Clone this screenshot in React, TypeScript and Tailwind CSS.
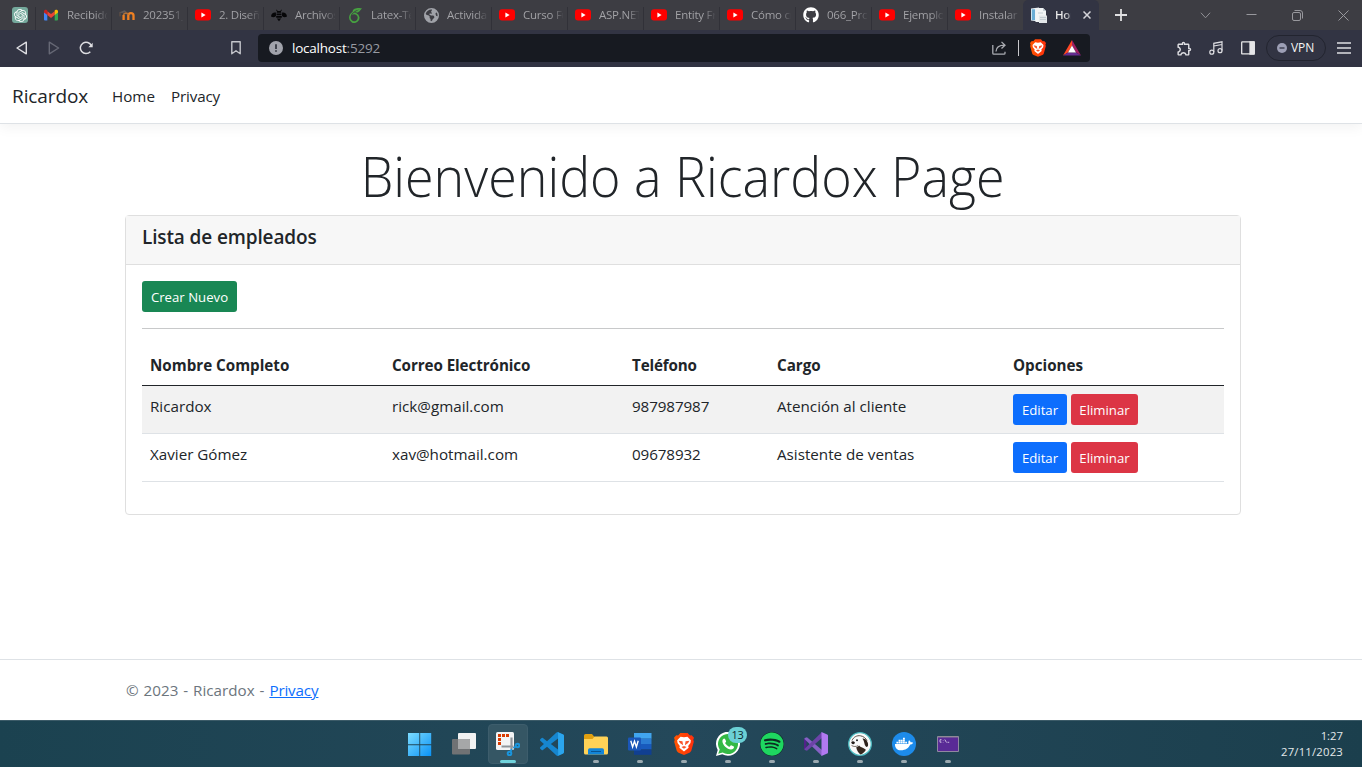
import type { ReactNode } from "react";
import { FaGithub, FaSpotify, FaDocker, FaEarthAmericas } from "react-icons/fa6";
import { SiOpenai, SiOverleaf } from "react-icons/si";
import { MdOutlineExtension } from "react-icons/md";

const YouTube = () => (
  <svg viewBox="0 0 16 16" className="size-4">
    <rect x="0" y="2.2" width="16" height="11.4" rx="3" fill="#f00" />
    <path d="M6.4 5.5v4.9l4.2-2.45z" fill="#fff" />
  </svg>
);

const Gmail = () => (
  <svg viewBox="0 0 16 16" className="size-4">
    <path d="M1 4.2v8.2a1 1 0 0 0 1 1h2.3V6.8L1 4.2z" fill="#4285f4" />
    <path d="M15 4.2v8.2a1 1 0 0 1-1 1h-2.3V6.8L15 4.2z" fill="#34a853" />
    <path d="M4.3 4.3 8 7.1l3.7-2.8v3.8L8 10.9 4.3 8.1z" fill="#ea4335" />
    <path d="M1 4.2C1 2.8 2.7 2.2 3.7 3l.6.5v4.6L1 5.6z" fill="#c5221f" />
    <path d="M15 4.2c0-1.4-1.7-2-2.7-1.2l-.6.5v4.6L15 5.6z" fill="#fbbc04" />
  </svg>
);

const Moodle = () => (
  <svg viewBox="0 0 16 16" className="size-4" fill="none">
    <path d="M4.6 13V8M9.3 13V8.600c0-3.300 5.200-3.300 5.200 0V13" stroke="#ef8022" strokeWidth="2.300" />
    <path d="M4.600 8c.3-2.300 3.800-2.500 4.600-.3" stroke="#b0713a" strokeWidth="1.600" />
    <path d="M0 5.400 5.500 3.200l2.200 1.300-4.500 1.500z" fill="#5e5a5a" />
    <path d="M1 5.400v4" stroke="#7a5a42" strokeWidth=".8" />
  </svg>
);

const Bee = () => (
  <svg viewBox="0 0 16 16" className="size-4" fill="#060608">
    <path d="M5.500 2.500 6.800 4h2.400l1.300-1.500.4.500-.9 1.500.3 1.300H5.700L6 4.500 5.100 3zM5.500 6.500h5v1.800h-5zM5.200 9h5.600v1.700H5.200zM5.800 11.400h4.400L8 14.200z" />
    <path d="M4.900 5.600C2.500 5 .2 6.800 0 9.400c1.800 1.200 4.500.9 5-.6zM11.100 5.600c2.400-.6 4.700 1.200 4.900 3.800-1.800 1.200-4.500.9-5-.6z" />
  </svg>
);

const PageIcon = () => (
  <svg viewBox="0 0 16 16" className="size-4">
    <path d="M0 1.500 8 .5v14l-8-1z" fill="#e8f1f6" />
    <path d="M.8 2.300h3.200v10.800H.8z" fill="#68acd5" />
    <path d="M4.500 1H12l3 3v11H4.500z" fill="#f1f4f5" />
    <path d="M12 1v3h3" fill="#c4ced5" />
    <path d="M8 8.500h8V16H8z" fill="#e2e6e9" />
    <path d="M7 6h5M9 10.500h6M9 12.500h6" stroke="#c3ccd2" />
  </svg>
);

const OpenAi = () => (
  <span className="flex size-4 items-center justify-center rounded-[3px] bg-[#75a99c] text-[13px] text-white">
    <SiOpenai />
  </span>
);

const BraveLion = ({ id, size }: { id: string; size: string }) => (
  <svg viewBox="0 0 22 24" className={size}>
    <defs>
      <linearGradient id={id} x1="0" x2="1">
        <stop stopColor="#ff5500" />
        <stop offset="1" stopColor="#ff2f0c" />
      </linearGradient>
    </defs>
    <path d="M7 0h8l2.500 2.600 2-.3L22 5l-.8 2.400.6 2L19 19.500c-.5 1-1 1.500-2 2.200L11 24l-6-2.300c-1-.7-1.500-1.200-2-2.200L.2 9.400l.6-2L0 5l2.500-2.700 2 .3z" fill={"url(#" + id + ")"} />
    <path d="m7.200 4 3.800.7 3.800-.7 3.700 4-.4 3-2.500 3.200.5 2-5.100 4-5.100-4 .5-2L3.900 11l-.4-3z" fill="#fff" />
    <path d="m5 8.300 4.300.8.700 4.200-3.500-2.300zM17 8.300l-4.300.8-.7 4.200 3.500-2.300zM8.200 15.200l2.800-1 2.800 1-2.800 2z" fill="#fb542b" />
  </svg>
);

type Tab = { icon: ReactNode; label: string };

const tabs: Tab[] = [
  { icon: <Gmail />, label: "Recibidos" },
  { icon: <Moodle />, label: "202351_" },
  { icon: <YouTube />, label: "2. Diseño" },
  { icon: <Bee />, label: "Archivos" },
  { icon: <SiOverleaf className="size-[15px] text-[#47a141]" />, label: "Latex-Te" },
  { icon: <FaEarthAmericas className="size-[15px] text-[#a0a2a8]" />, label: "Actividad" },
  { icon: <YouTube />, label: "Curso Fu" },
  { icon: <YouTube />, label: "ASP.NET" },
  { icon: <YouTube />, label: "Entity Fr" },
  { icon: <YouTube />, label: "Cómo cr" },
  { icon: <FaGithub className="size-4 text-white" />, label: "066_Proy" },
  { icon: <YouTube />, label: "Ejemplo" },
  { icon: <YouTube />, label: "Instalar" },
];

function TabStrip() {
  return (
    <div className="flex h-[30px] items-center bg-[#3d3d43]">
      <div className="flex h-full w-[35px] items-center pl-3">
        <OpenAi />
      </div>
      {tabs.map((tab) => (
        <div key={tab.label} className="flex h-full w-[76px] shrink-0 items-center">
          <span className="h-[23px] w-px self-end bg-[#313138]" />
          <span className="ml-[7px] flex w-4 shrink-0 justify-center">{tab.icon}</span>
          <span className="ml-2 w-[40px] overflow-hidden bg-gradient-to-r from-[#a5a5a9] from-70% to-[#a5a5a918] bg-clip-text text-[11.5px] leading-5 tracking-[-0.25px] whitespace-nowrap text-transparent">
            {tab.label}
          </span>
        </div>
      ))}
      <div className="flex h-full w-[76px] items-center rounded-t-[5px] bg-[#323443] pl-2">
        <PageIcon />
        <span className="ml-2 w-[16px] overflow-hidden bg-gradient-to-r from-[#eee] from-50% to-[#ffffff60] bg-clip-text text-[11.5px] leading-5 font-semibold tracking-[-0.3px] whitespace-nowrap text-transparent">
          Home
        </span>
        <svg viewBox="0 0 8 8" className="ml-[12px] size-2" stroke="#d5d5da" strokeWidth="1.500">
          <path d="m.5.5 7 7m0-7-7 7" />
        </svg>
      </div>
      <svg viewBox="0 0 12 12" className="ml-4 size-3" stroke="#e0e0e2" strokeWidth="1.800">
        <path d="M6 0v12M0 6h12" />
      </svg>
      <div className="ml-auto flex h-full items-center gap-[35px] pr-[13px]">
        <svg viewBox="0 0 12 12" className="size-[11px]" fill="none" stroke="#98989d">
          <path d="m1 3 5 5.500L11 3" />
        </svg>
        <svg viewBox="0 0 11 11" className="size-[11px]" stroke="#98989d">
          <path d="M.5 4.500h10" />
        </svg>
        <svg viewBox="0 0 11 11" className="size-[11px]" fill="none" stroke="#98989d">
          <rect x=".5" y="2.500" width="8" height="8" rx="1.500" />
          <path d="M2.500.5H8a2.500 2.500 0 0 1 2.500 2.500v5.500" />
        </svg>
        <svg viewBox="0 0 11 11" className="size-[11px]" stroke="#98989d">
          <path d="m.5.5 10 10m0-10-10 10" />
        </svg>
      </div>
    </div>
  );
}

function AddressBar() {
  return (
    <div className="flex h-[37px] items-center bg-[#323443] pb-px">
      <svg viewBox="0 0 12 14" className="ml-4 h-[14px] w-3" fill="none" stroke="#dedee2" strokeWidth="1.400" strokeLinejoin="round">
        <path d="M10.300 1.200v11.600L1 7z" />
      </svg>
      <svg viewBox="0 0 12 14" className="ml-5 h-[14px] w-3" fill="none" stroke="#666875" strokeWidth="1.400" strokeLinejoin="round">
        <path d="M1.300 1.200v11.600L10.600 7z" />
      </svg>
      <svg viewBox="0 0 14 14" className="ml-[19px] size-[14px]" fill="none" stroke="#dedee2" strokeWidth="1.500">
        <path d="M11.300 10.700A5.700 5.700 0 1 1 12.300 4.600" />
        <path d="M13.700 1.800v4.500H9.300z" fill="#dedee2" stroke="none" />
      </svg>
      <svg viewBox="0 0 10 14" className="ml-[138px] h-[14px] w-[10px]" fill="none" stroke="#c4c5cb" strokeWidth="1.400" strokeLinejoin="round">
        <path d="M.8.8h8.400v12L5 9.800.8 12.800z" />
      </svg>
      <div className="ml-[17px] flex h-7 w-[832px] items-center rounded bg-[#171a21] pr-[9px] pl-[11px]">
        <svg viewBox="0 0 14 14" className="size-[14px]">
          <circle cx="7" cy="7" r="7" fill="#a1a3ab" />
          <path d="M7 3.300v4.700M7 9.200v1.500" stroke="#30333c" strokeWidth="1.700" />
        </svg>
        <span className="ml-[9px] text-[13.5px] leading-5 tracking-[-0.22px] text-white">
          localhost<span className="text-[#989ba2]">:5292</span>
        </span>
        <svg viewBox="0 0 14 14" className="ml-auto size-[14px]" fill="none" stroke="#aaacb2" strokeWidth="1.300">
          <path d="M.8 4v8.200c0 .6.4 1 1 1H12c.6 0 1-.4 1-1v-1.500M4 10.500C4.200 6.500 7 4.200 12.500 4.200M9.500.9l3.500 3.300-3.500 3.300" />
        </svg>
        <span className="ml-[12px] h-4 w-px bg-[#c8c8cc]" />
        <span className="ml-[11px]">
          <BraveLion id="lionBar" size="h-[18px] w-4" />
        </span>
        <svg viewBox="0 0 18 16" className="ml-[17px] h-4 w-[18px]">
          <path d="M9 0 0 15.500 5 12.500 9 5.500z" fill="#ff4724" />
          <path d="m9 0 9 15.500-5-3L9 5.500z" fill="#9e1f63" />
          <path d="M0 15.500h18l-5-3H5z" fill="#662d91" />
          <path d="m9 5.500 4 7H5z" fill="#fff" />
        </svg>
      </div>
      <MdOutlineExtension className="ml-[86px] size-[17px] text-[#dedee2]" />
      <svg viewBox="0 0 14 14" className="ml-[16px] size-[14px]" fill="none" stroke="#dedee2" strokeWidth="1.200">
        <path d="M4.800 11V2.300L13 .8v8.700M4.800 5 13 3.500" />
        <circle cx="2.800" cy="11.200" r="2" />
        <circle cx="11" cy="9.700" r="2" />
      </svg>
      <svg viewBox="0 0 14 14" className="ml-[18px] h-[14px] w-[14px]" fill="none" stroke="#e6e6e8" strokeWidth="1.300">
        <rect x=".7" y=".9" width="12.600" height="12" rx=".5" />
        <path d="M9 1h4v12H9z" fill="#e6e6e8" />
      </svg>
      <div className="ml-[11px] flex h-[26px] w-[60px] items-center rounded-full border border-[#22242f] pl-[10px]">
        <svg viewBox="0 0 10 10" className="size-[10px]">
          <circle cx="5" cy="5" r="5" fill="#9d9fb5" />
          <path d="M2.500 5h5" stroke="#323443" strokeWidth="1.300" />
        </svg>
        <span className="ml-1 text-[12px] font-medium tracking-[-0.1px] text-[#f4f4f4]">VPN</span>
      </div>
      <svg viewBox="0 0 14 12" className="ml-[11px] h-3 w-[14px]" stroke="#dedee2" strokeWidth="1.400">
        <path d="M0 1h14M0 6h14M0 11h14" />
      </svg>
    </div>
  );
}

const employees = [
  { name: "Ricardox", mail: "rick@gmail.com", phone: "987987987", job: "Atención al cliente" },
  { name: "Xavier Gómez", mail: "xav@hotmail.com", phone: "09678932", job: "Asistente de ventas" },
];

function EmployeeCard() {
  return (
    <section className="h-[300px] w-[1116px] rounded-[4px] border border-[#dfdfdf]">
      <div className="h-[49px] border-b border-[#dfdfdf] bg-[#f7f7f7] px-4 pt-[9px]">
        <h5 className="text-[19px] leading-6 font-semibold tracking-[-0.13px]">Lista de empleados</h5>
      </div>
      <div className="p-4">
        <button className="block h-[31px] w-[95px] rounded-[3px] bg-[#198754] pt-px text-[13.2px] leading-[21px] text-white">
          Crear Nuevo
        </button>
        <hr className="my-4 border-[#c8c9ca]" />
        <table className="w-full table-fixed text-left">
          <colgroup>
            <col className="w-[242px]" />
            <col className="w-[240px]" />
            <col className="w-[145px]" />
            <col className="w-[236px]" />
            <col />
          </colgroup>
          <thead>
            <tr className="h-[40px] border-b border-[#212529]">
              <th className="px-2 pt-px">Nombre Completo</th>
              <th className="px-2 pt-px tracking-[-0.08px]">Correo Electrónico</th>
              <th className="px-2 pt-px tracking-[-0.15px]">Teléfono</th>
              <th className="px-2 pt-px">Cargo</th>
              <th className="px-2 pt-px">Opciones</th>
            </tr>
          </thead>
          <tbody>
            {employees.map((e) => (
              <tr key={e.name} className="h-12 border-b border-[#dee2e6] align-top odd:bg-[#f2f2f2]">
                <td className="px-2 pt-2">{e.name}</td>
                <td className="px-2 pt-2">{e.mail}</td>
                <td className="px-2 pt-2 tracking-[-0.1px]">{e.phone}</td>
                <td className="px-2 pt-2">{e.job}</td>
                <td className="px-2 pt-2">
                  <div className="flex gap-1 text-[13.2px] leading-[21px] text-white">
                    <button className="h-[31px] w-[54px] rounded-[3px] bg-[#0d6efd] pt-[2px]">Editar</button>
                    <button className="h-[31px] w-[67px] rounded-[3px] bg-[#dc3545] pt-[2px]">Eliminar</button>
                  </div>
                </td>
              </tr>
            ))}
          </tbody>
        </table>
      </div>
    </section>
  );
}

const WindowsLogo = () => (
  <svg viewBox="0 0 24 24" className="size-6">
    <defs>
      <linearGradient id="win" x1="0" y1="0" x2="1" y2="1">
        <stop stopColor="#7cdcff" />
        <stop offset="1" stopColor="#0a92f5" />
      </linearGradient>
    </defs>
    <path d="M0 1h11.300v11.300H0zM12.200 1h11v11.300h-11zM0 13.200h11.300V24H0zM12.200 13.200h11V24h-11z" fill="url(#win)" />
  </svg>
);

const TaskView = () => (
  <svg viewBox="0 0 24 24" className="size-6">
    <rect x="6" y="1" width="18" height="16" rx="1" fill="#f2f2f2" />
    <rect y="7" width="18" height="15.500" rx="1" fill="#707274" />
    <path d="M6 7h11a1 1 0 0 1 1 1v9H6z" fill="#a6a7a8" />
  </svg>
);

const Snip = () => (
  <svg viewBox="0 0 24 24" className="size-6">
    <rect width="18" height="18" rx="1.500" fill="#f3f4f5" />
    <path d="M2 2h3v3H2zM6 2h3v3H6zM10 2h3v3h-3zM2 6h3v3H2zM2 10h3v3H2z" fill="#d83b01" />
    <path d="M5.500 14.500h12M15.500 5.500v12" stroke="#8f959b" strokeWidth="2.200" fill="none" />
    <circle cx="21.500" cy="13.500" r="1.800" fill="none" stroke="#1995dd" strokeWidth="2" />
    <circle cx="13.500" cy="21.500" r="1.800" fill="none" stroke="#1995dd" strokeWidth="2" />
    <path d="m19.800 14.500-2.500 1.500M14.500 19.800l1.200-3" stroke="#1995dd" strokeWidth="1.800" />
  </svg>
);

const VsCode = () => (
  <svg viewBox="0 0 24 24" className="size-6">
    <path fill="#1686cf" d="M23.150 2.587L18.210.210a1.494 1.494 0 0 0-1.705.290l-9.460 8.630-4.120-3.128a.999.999 0 0 0-1.276.057L.327 7.261A1 1 0 0 0 .326 8.740L3.899 12 .326 15.260a1 1 0 0 0 .001 1.479L1.650 17.940a.999.999 0 0 0 1.276.057l4.120-3.128 9.460 8.630a1.492 1.492 0 0 0 1.704.290l4.942-2.377A1.500 1.500 0 0 0 24 20.060V3.939a1.500 1.500 0 0 0-.850-1.352zm-5.146 14.861L10.826 12l7.178-5.448v10.896z" />
    <path fill="#2ba5ed" d="M18 .2 23.150 2.587A1.500 1.500 0 0 1 24 3.939V20.060a1.500 1.500 0 0 1-.850 1.350L18.200 23.800z" />
  </svg>
);

const Folder = () => (
  <svg viewBox="0 0 24 24" className="size-6">
    <path d="M0 3.500A1.500 1.500 0 0 1 1.500 2H8l2.500 3H22v6H0z" fill="#e0a010" />
    <path d="M0 7h8.500l2-2.500h12A1.500 1.500 0 0 1 24 6v15a1.500 1.500 0 0 1-1.500 1.500h-21A1.500 1.500 0 0 1 0 21z" fill="#ffd257" />
    <path d="M4 22.500V18a1.800 1.800 0 0 1 1.800-1.800h12.400A1.800 1.800 0 0 1 20 18v4.500z" fill="#1385d8" />
    <path d="M7 19.500h10" stroke="#085492" />
  </svg>
);

const Word = () => (
  <svg viewBox="0 0 24 24" className="size-6">
    <path d="M6 1h17.500v5.700H6z" fill="#41a5ee" />
    <path d="M6 6.500h17.500v5.600H6z" fill="#2b7cd3" />
    <path d="M6 12h17.500v5.500H6z" fill="#185abd" />
    <path d="M6 17.500h17.500v5.300H6z" fill="#103f91" />
    <rect y="5.500" width="13" height="13" rx="1" fill="#1a56b8" />
    <path d="m2.800 8.800 1.800 6.200 1.900-5.700 1.900 5.700 1.800-6.200" fill="none" stroke="#fff" strokeWidth="1.400" />
  </svg>
);

const WhatsApp = () => (
  <span className="relative flex size-6 items-center justify-center">
    <svg viewBox="0 0 24 24" className="size-6">
      <path d="M0 24 1.700 17.900A12 12 0 1 1 6.300 22.300z" fill="#fff" />
      <path d="M2.200 21.800 3.700 17.600A10 10 0 1 1 6.700 20.500z" fill="#34b945" />
      <path d="M8.300 6.500c-.8 0-1.900 1-1.900 2.700 0 3.500 4.800 8.300 8.500 8.300 1.900 0 3.200-1.200 3.200-2.700 0-.4-2.700-1.700-3.100-1.600-.5.100-1 1.600-1.500 1.600-1.100 0-4.300-2.900-4.300-3.800 0-.4 1-1.100.9-1.600-.1-.5-1-2.900-1.800-2.900z" fill="#fff" />
    </svg>
    <span className="absolute -top-[5px] left-[12px] flex h-4 w-[19px] items-center justify-center rounded-full bg-[#6bd0d5] text-[11px] leading-4 tracking-[-0.4px] text-[#10262c]">
      13
    </span>
  </span>
);

const VisualStudio = () => (
  <svg viewBox="0 0 24 24" className="size-6">
    <path d="M0 7.300 2.500 5.400V18.600L0 16.700z" fill="#52218a" />
    <path d="M.7 6.100 3 5.300 18 17.900V24L.4 7z" fill="#8661c5" />
    <path d="M.7 17.900 3 18.700 18 6.100V0L.4 17z" fill="#6c43a8" />
    <path d="m17.500 0 5.700 2.400c.5.200.8.700.8 1.200v16.800c0 .5-.3 1-.8 1.200L17.500 24z" fill="#b179f1" />
  </svg>
);

const Beaver = () => (
  <svg viewBox="0 0 24 24" className="size-6">
    <circle cx="12" cy="12" r="11.300" fill="#fafafa" stroke="#4ebcc2" strokeWidth="1.300" />
    <path d="M4 8.500C5.500 5 9 3.200 12.500 3.800c3 .5 5.500 2.500 6.500 5" fill="none" stroke="#4a3b31" strokeWidth=".9" />
    <path d="M14.500 6.500c3-.4 5.600 2.800 5.600 6.300 0 2.200-1.500 2.800-2.500 1.500-1.500-1.900-1-4.800-3.100-7.800z" fill="#2d221c" />
    <path d="M3.200 10.200c.8-1.200 2.800-1.100 3.600.1.300.9-.6 1.700-1.500 1.900-.9.200-1.800-.8-2.100-2z" fill="#241c18" />
    <path d="M3.600 13.500c1.900 1.300 4.600 1.300 6.500.1" fill="none" stroke="#5b4c43" strokeWidth=".8" />
    <path d="M8.200 15.300c1.300-.2 2.400-1 2.900-1.800 1.300 1.800 4.600 2.300 6.800 4.300-1 2.100-2.900 3.900-5.300 4.700-2.100-1.500-3.900-4.100-4.400-7.200z" fill="#35281f" />
    <circle cx="9" cy="8.200" r="1" fill="#222" />
  </svg>
);

const Terminal = () => (
  <svg viewBox="0 0 24 24" className="size-6">
    <path d="M1.500 4.500h21v15h-21z" fill="#592a96" stroke="#8f88a0" />
    <path d="M2 4.800h20" stroke="#8d8b94" strokeWidth="1.300" />
    <path d="M5.500 7.700H4v2.500h1.500M7.200 8v.5M7.200 10v.4M8.800 7.500l1.700 3M11.500 10.300h1.700" stroke="#e2d9ed" strokeWidth=".8" fill="none" />
  </svg>
);

const apps: { name: string; icon: ReactNode; state: "none" | "open" | "active" }[] = [
  { name: "start", icon: <WindowsLogo />, state: "none" },
  { name: "tasks", icon: <TaskView />, state: "none" },
  { name: "snip", icon: <Snip />, state: "active" },
  { name: "code", icon: <VsCode />, state: "none" },
  { name: "files", icon: <Folder />, state: "open" },
  { name: "word", icon: <Word />, state: "open" },
  { name: "brave", icon: <BraveLion id="lionTask" size="h-6 w-[20px]" />, state: "open" },
  { name: "whatsapp", icon: <WhatsApp />, state: "open" },
  { name: "spotify", icon: <FaSpotify className="size-6 rounded-full bg-[#0d2b22] text-[#1ed760]" />, state: "open" },
  { name: "studio", icon: <VisualStudio />, state: "open" },
  { name: "database", icon: <Beaver />, state: "open" },
  {
    name: "docker",
    icon: (
      <span className="flex size-6 items-center justify-center rounded-full bg-[#1d8bea]">
        <FaDocker className="size-[18px] text-white" />
      </span>
    ),
    state: "open",
  },
  { name: "terminal", icon: <Terminal />, state: "open" },
];

function Taskbar() {
  return (
    <footer className="flex h-[47px] items-start border-t border-[#3c5b68] bg-gradient-to-r from-[#1b4250] via-[#24485a] to-[#1b3f4d]">
      <div className="ml-[400px] flex gap-1 pt-[3px]">
        {apps.map((app) => (
          <div
            key={app.name}
            className={
              app.state === "active"
                ? "flex h-10 w-10 flex-col items-center rounded border border-[#3d5d6c] bg-[#355664] pt-[7px]"
                : "flex h-10 w-10 flex-col items-center pt-2"
            }
          >
            {app.icon}
            {app.state === "active" && <span className="mt-1 h-[3px] w-4 rounded-full bg-[#70d3dc]" />}
            {app.state === "open" && <span className="mt-1 h-[3px] w-1.5 rounded-full bg-[#9aa9b0]" />}
          </div>
        ))}
      </div>
      <div className="mr-[19px] ml-auto pt-[7px] text-right text-[11.3px] leading-4 text-[#e3e9eb]">
        <div>1:27</div>
        <div className="tracking-[0.2px]">27/11/2023</div>
      </div>
    </footer>
  );
}

export default function App() {
  return (
    <div className="flex h-[767px] w-[1362px] flex-col overflow-hidden bg-white font-['Open_Sans','Noto_Sans',sans-serif] text-[15.2px] leading-6 text-[#212529]">
      <TabStrip />
      <AddressBar />
      <header className="flex h-[57px] shrink-0 items-center border-b border-[#dee2e6] px-3 pt-px shadow-[0_4px_12px_rgba(0,0,0,0.05)]">
        <span className="w-[100px] text-[19px] leading-[30px] tracking-[-0.1px]">Ricardox</span>
        <nav className="flex">
          <a className="w-[59px]">Home</a>
          <a className="tracking-[-0.15px]">Privacy</a>
        </nav>
      </header>
      <main className="flex h-[535px] shrink-0 flex-col items-center pt-4 pl-1">
        <h1 className="mb-2 h-[67px] scale-x-[0.945] pt-[2px] text-[55px] leading-[67px] font-light whitespace-nowrap">Bienvenido a Ricardox Page</h1>
        <EmployeeCard />
      </main>
      <div className="h-[61px] shrink-0 border-t border-[#dee2e6] pt-[18px] pl-[126px] [word-spacing:1px] text-[#6c757d]">
        © 2023 - Ricardox - <a className="tracking-[-0.15px] text-[#0d6efd] underline">Privacy</a>
      </div>
      <Taskbar />
    </div>
  );
}
